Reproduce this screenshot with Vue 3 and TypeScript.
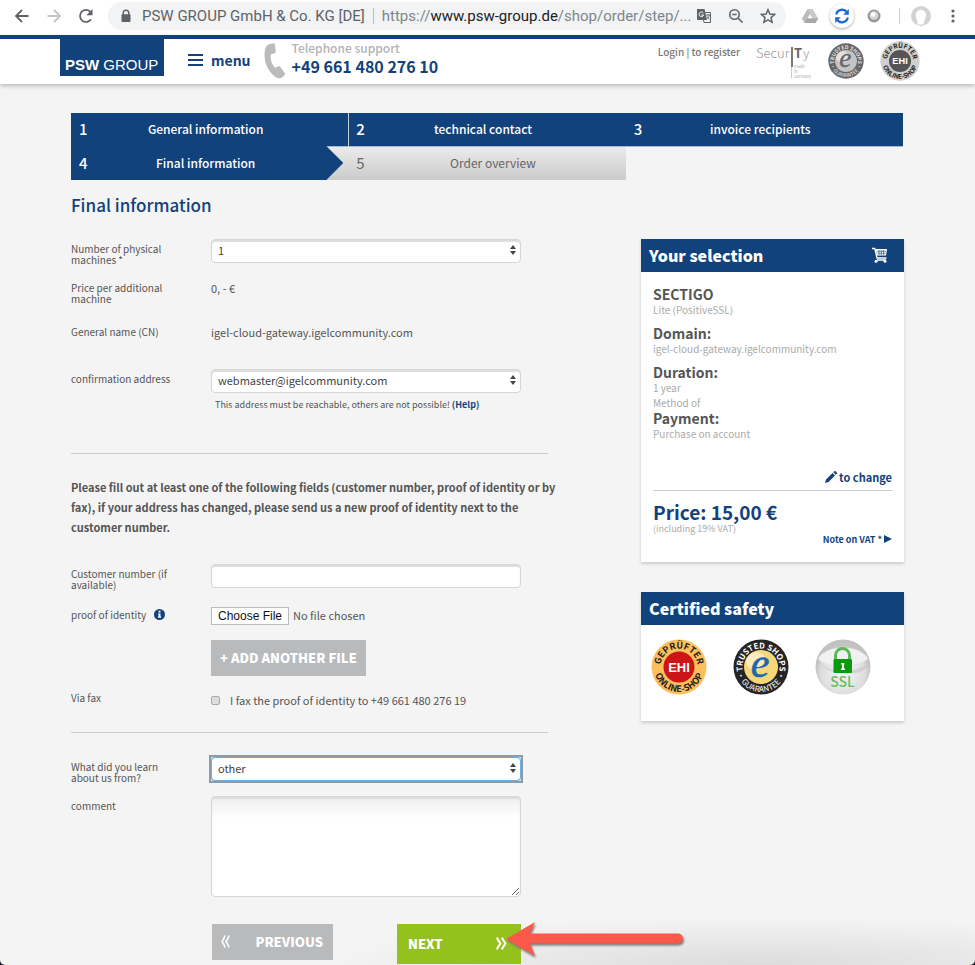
<script setup lang="ts">
import { ref } from 'vue'

interface Step {
  no: number
  label: string
  state: 'done' | 'current' | 'upcoming'
}

interface Detail {
  term: string
  value: string
  lead?: string
}

const steps: Step[] = [
  { no: 1, label: 'General information', state: 'done' },
  { no: 2, label: 'technical contact', state: 'done' },
  { no: 3, label: 'invoice recipients', state: 'done' },
  { no: 4, label: 'Final information', state: 'current' },
  { no: 5, label: 'Order overview', state: 'upcoming' },
]

const details: Detail[] = [
  { term: 'SECTIGO', value: 'Lite (PositiveSSL)' },
  { term: 'Domain:', value: 'igel-cloud-gateway.igelcommunity.com' },
  { term: 'Duration:', value: '1 year' },
  { term: 'Payment:', value: 'Purchase on account', lead: 'Method of' },
]

const machines = ref('1')
const address = ref('webmaster@igelcommunity.com')
const customerNumber = ref('')
const viaFax = ref(false)
const source = ref('other')
const comment = ref('')
</script>

<template>
  <div class="page">
    <svg class="defs" aria-hidden="true">
      <defs>
        <path id="arc-top" d="M10.600 34.300A18.500 18.500 0 1 1 45.400 34.300" />
        <path id="arc-bottom" d="M3 28a25 25 0 0 0 50 0" />
        <symbol id="badge-ehi" viewBox="0 0 56 56">
          <circle cx="28" cy="28" r="27.5" fill="var(--ring)" />
          <circle cx="28" cy="28" r="15.500" fill="var(--core)" />
          <g font-family="Noto Sans CJK SC, sans-serif" font-weight="700" font-size="9" fill="var(--ink)" text-anchor="middle">
            <text><textPath href="#arc-top" startOffset="50%">GEPRÜFTER</textPath></text>
            <text><textPath href="#arc-bottom" startOffset="50%">ONLINE-SHOP</textPath></text>
          </g>
          <text x="28" y="32.500" text-anchor="middle" font-family="Liberation Sans, sans-serif" font-weight="700" font-size="13" fill="#fff">EHI</text>
        </symbol>
        <symbol id="badge-trusted" viewBox="0 0 56 56">
          <circle cx="28" cy="28" r="27.500" fill="var(--ring)" />
          <circle cx="28" cy="28" r="17" fill="var(--core)" />
          <ellipse cx="23" cy="22" rx="10" ry="9" fill="#fff" opacity="0.5" />
          <g font-family="Noto Sans CJK SC, sans-serif" font-weight="700" fill="var(--ink)" text-anchor="middle">
            <text font-size="8"><textPath href="#arc-top" startOffset="50%">TRUSTED SHOPS</textPath></text>
            <text font-size="8" font-weight="400"><textPath href="#arc-bottom" startOffset="50%">· GUARANTEE ·</textPath></text>
          </g>
          <text x="27" y="38" text-anchor="middle" font-family="Liberation Serif, serif" font-style="italic" font-weight="400" font-size="42" fill="var(--letter)" stroke="var(--letter)" stroke-width=".6">e</text>
        </symbol>
      </defs>
    </svg>

    <div class="browser">
      <button class="tool" type="button" aria-label="Back">
        <svg width="16" height="16" viewBox="0 0 16 16" fill="none" stroke="#5f6368" stroke-width="1.8"><path d="M14.500 8H2.500M8 2 2 8l6 6" /></svg>
      </button>
      <button class="tool" type="button" aria-label="Forward">
        <svg width="16" height="16" viewBox="0 0 16 16" fill="none" stroke="#c1c3c5" stroke-width="1.8"><path d="M1.500 8h12M8 2l6 6-6 6" /></svg>
      </button>
      <button class="tool" type="button" aria-label="Reload">
        <svg width="16" height="16" viewBox="0 0 16 16"><path d="M13 11.300A6 6 0 1 1 12.700 4.200" fill="none" stroke="#5f6368" stroke-width="1.800" /><path d="M14.500 1v6.200H8.300z" fill="#5f6368" /></svg>
      </button>
      <div class="omnibox">
        <svg class="lock" width="16" height="16" viewBox="0 0 16 16"><path d="M5.200 7V5a2.800 2.800 0 0 1 5.600 0v2" fill="none" stroke="#5f6368" stroke-width="1.500" /><rect x="3.500" y="6.300" width="9" height="7.700" rx="1" fill="#5f6368" /></svg>
        <span class="issuer">PSW GROUP GmbH &amp; Co. KG [DE]</span>
        <span class="url">https://<b>www.psw-group.de</b>/shop/order/step/...</span>
        <button class="tool" type="button" aria-label="Translate">
          <svg width="16" height="16" viewBox="0 0 16 16"><path d="M6 4.500h8.500v10H8z" fill="#f1f3f4" stroke="#5f6368" /><path d="M1 1h7.500L11 12H2a1 1 0 0 1-1-1z" fill="#5f6368" /><path d="M7.300 5A2.300 2.300 0 1 0 7.600 7H5.400" fill="none" stroke="#fff" /><path d="M10 7h4M12 6v1M13.300 7c-.3 1.800-1.300 3-2.500 4M11 8.500c.5 1 1.300 1.800 2.300 2.500" fill="none" stroke="#5f6368" stroke-width=".9" /></svg>
        </button>
        <button class="tool" type="button" aria-label="Zoom">
          <svg width="16" height="16" viewBox="0 0 16 16" fill="none" stroke="#5f6368" stroke-width="1.600"><circle cx="6.500" cy="6.500" r="4.700" /><path d="m10 10 4.500 4.500M4.300 6.500h4.400" /></svg>
        </button>
        <button class="tool" type="button" aria-label="Bookmark">
          <svg width="16" height="16" viewBox="0 0 16 16"><path d="m8 1.700 1.900 4.400 4.700.4-3.600 3.100 1.100 4.700L8 11.800l-4.100 2.500L5 9.600 1.400 6.500l4.700-.4z" fill="none" stroke="#5f6368" stroke-width="1.500" /></svg>
        </button>
      </div>
      <button class="tool" type="button" aria-label="Drive">
        <svg width="16" height="14" viewBox="0 0 16 14"><path d="M5.500 0h5L16 9.500 13.500 14h-11L0 9.500z" fill="#bbb" /><path d="M5.500 0h5L16 9.500H11z" fill="#c9c9c9" /><path d="m8 5 2.600 4.500H5.400z" fill="#fff" /><path d="M2.500 14 5 9.500h11L13.500 14z" fill="#a9a9a9" /></svg>
      </button>
      <button class="tool" type="button" aria-label="Sync">
        <svg class="sync" width="24" height="24" viewBox="0 0 24 24"><g fill="none" stroke="#1a66d6" stroke-width="2.200"><path d="M6.200 10.500A6 6 0 0 1 17 8.300M17.800 13.500A6 6 0 0 1 7 15.700" /></g><path d="M18.800 5v5.800h-5.600zM5.200 19v-5.800h5.600z" fill="#1a66d6" /></svg>
      </button>
      <button class="tool" type="button" aria-label="Extension">
        <svg width="14" height="14" viewBox="0 0 14 14"><circle cx="7" cy="7" r="6.500" fill="#999" /><circle cx="7" cy="6.500" r="4.300" fill="#d8d8d8" /><circle cx="6" cy="5.500" r="2.300" fill="#fff" /></svg>
      </button>
      <span class="bar"></span>
      <button class="avatar" type="button" aria-label="Profile">
        <svg width="20" height="20" viewBox="0 0 20 20"><circle cx="10" cy="10" r="10" fill="#d3d3d6" /><path d="M6.500 18.500C7.500 16 4.700 12.500 4.700 9a5 5 0 0 1 10.300 0c0 3.500-2.300 5-2.300 9.500z" fill="#fff" /></svg>
      </button>
      <button class="tool" type="button" aria-label="More">
        <svg width="4" height="16" viewBox="0 0 4 16" fill="#5f6368"><circle cx="2" cy="3" r="1.600" /><circle cx="2" cy="8" r="1.600" /><circle cx="2" cy="13" r="1.600" /></svg>
      </button>
    </div>

    <header class="site">
      <a class="logo" href="#"><b>PSW</b> GROUP</a>
      <button class="menu" type="button">
        <svg width="15" height="12" viewBox="0 0 15 12" fill="#12427b"><path d="M0 0h15v2H0zM0 5h15v2H0zM0 10h15v2H0z" /></svg>
        menu
      </button>
      <div class="phone">
        <svg width="22" height="36" viewBox="0 0 22 36" fill="#bbb"><path d="M6 1 9.500.3c.8-.1 1.300.3 1.400 1l.8 7.500c.1.800-.4 1.300-1 1.500L7 11.200c-1 5 .5 9.500 4 13.500l3.500-1.500c.7-.3 1.300-.1 1.700.5l4.600 6.500c.5.700.4 1.300-.2 1.800l-2.800 2.500c-2 1.700-6.500.3-9.800-3.500C2 24 0 17 .7 8.500 1 4.500 3 1.500 6 1z" /></svg>
        <p><span>Telephone support</span><strong>+49 661 480 276 10</strong></p>
      </div>
      <nav class="account"><a href="#">Login</a> | <a href="#">to register</a></nav>
      <svg class="security" width="56" height="36" viewBox="0 0 56 36" font-family="Noto Sans CJK SC, sans-serif" fill="#999">
        <text x="0" y="14" font-size="13" font-weight="300">Secur</text>
        <path d="M35 3h2v20h-2z" fill="#777" /><path d="M35 23h1v11h-1z" fill="#ccc" />
        <text x="38" y="14" font-size="13" font-weight="700" fill="#666">T</text>
        <text x="47" y="14" font-size="13" font-weight="300">y</text>
        <g font-size="4" fill="#aaa"><text x="38" y="24">made</text><text x="38" y="29">in</text><text x="38" y="34">Germany</text></g>
      </svg>
      <svg class="seal trusted grey" width="36" height="36"><use href="#badge-trusted" /></svg>
      <svg class="seal ehi grey" width="40" height="40"><use href="#badge-ehi" /></svg>
    </header>

    <main class="content">
      <ol class="steps">
        <li v-for="step in steps" :key="step.no" :class="step.state">
          <span class="no">{{ step.no }}</span>
          <span class="name">{{ step.label }}</span>
        </li>
      </ol>

      <h1>Final information</h1>

      <div class="columns">
        <form @submit.prevent>
          <div class="row">
            <label for="machines">Number of physical machines *</label>
            <div class="select">
              <select id="machines" v-model="machines"><option>1</option><option>2</option></select>
              <svg width="6" height="10" viewBox="0 0 6 10" fill="#444"><path d="M3 0l3 4H0zM3 10l3-4H0z" /></svg>
            </div>
          </div>
          <div class="row price-row">
            <span class="label">Price per additional machine</span>
            <span class="value">0, - €</span>
          </div>
          <div class="row name-row">
            <span class="label">General name (CN)</span>
            <span class="value">igel-cloud-gateway.igelcommunity.com</span>
          </div>
          <div class="row address-row">
            <label for="address">confirmation address</label>
            <div>
              <div class="select">
                <select id="address" v-model="address"><option>webmaster@igelcommunity.com</option></select>
                <svg width="6" height="10" viewBox="0 0 6 10" fill="#444"><path d="M3 0l3 4H0zM3 10l3-4H0z" /></svg>
              </div>
              <p class="hint">This address must be reachable, others are not possible! <a href="#">(Help)</a></p>
            </div>
          </div>

          <hr>
          <p class="notice">Please fill out at least one of the following fields (customer number, proof of identity or by fax), if your address has changed, please send us a new proof of identity next to the customer number.</p>

          <div class="row">
            <label for="customer">Customer number (if available)</label>
            <input id="customer" v-model="customerNumber" class="text" type="text">
          </div>
          <div class="row file-row">
            <label for="proof">proof of identity
              <svg class="info" width="11" height="11" viewBox="0 0 11 11"><circle cx="5.500" cy="5.500" r="5.500" fill="#12427b" /><path d="M4.600 1.800h1.900v1.600H4.600zM4 4.400h2.500v3.200h.7v1.200H3.900V7.600h.7v-2H4z" fill="#fff" /></svg>
            </label>
            <div>
              <input id="proof" class="file" type="file">
              <button class="add" type="button">+ ADD ANOTHER FILE</button>
            </div>
          </div>
          <div class="row fax-row">
            <span class="label">Via fax</span>
            <label class="choice"><input v-model="viaFax" type="checkbox">I fax the proof of identity to +49 661 480 276 19</label>
          </div>

          <hr class="second">
          <div class="row">
            <label for="source">What did you learn about us from?</label>
            <div class="select focused">
              <select id="source" v-model="source"><option>other</option></select>
              <svg width="6" height="10" viewBox="0 0 6 10" fill="#444"><path d="M3 0l3 4H0zM3 10l3-4H0z" /></svg>
            </div>
          </div>
          <div class="row comment-row">
            <label for="comment">comment</label>
            <textarea id="comment" v-model="comment"></textarea>
          </div>

          <div class="actions">
            <button class="previous" type="button">
              <svg width="9" height="13" viewBox="0 0 9 13" fill="none" stroke="#fff" stroke-width="1.500"><path d="M4 .5C3.500 3 2.500 4.500 1 6.500 2.500 8.500 3.500 10 4 12.500M8 .5C7.500 3 6.500 4.500 5 6.500 6.500 8.500 7.500 10 8 12.500" /></svg>
              PREVIOUS
            </button>
            <div class="forward">
              <button class="next" type="submit">
                NEXT
                <svg width="11" height="13" viewBox="0 0 11 13" fill="none" stroke="#fff" stroke-width="2"><path d="M1 .5C1.500 3 3 4.500 4.500 6.500 3 8.500 1.500 10 1 12.500M6 .5C6.500 3 8 4.500 9.500 6.500 8 8.500 6.500 10 6 12.500" /></svg>
              </button>
              <svg class="pointer" width="184" height="42" viewBox="0 0 184 42"><path d="M1 18 30 1 25 12.500H173a5 5 0 0 1 0 10H25L30 35z" fill="#fd594b" /></svg>
            </div>
          </div>
        </form>

        <aside>
          <section class="card">
            <h2>Your selection
              <svg width="16" height="16" viewBox="0 0 16 16"><path d="M0 1.500h2.800L5 11h9.500M5 13h9" fill="none" stroke="#fff" stroke-width="1.300" /><path d="M3.500 2H15l-1 6.500H5z" fill="#fff" /><path d="M5 4.300h9M5.500 6.300h8M7 3v5M9.300 3v5M11.600 3v5" stroke="#12427b" stroke-width=".6" /><circle cx="4" cy="14.200" r="1.500" fill="#fff" /><circle cx="13" cy="14.200" r="1.500" fill="#fff" /></svg>
            </h2>
            <div class="body">
              <dl>
                <div v-for="item in details" :key="item.term" :class="{ led: item.lead }">
                  <dt><small v-if="item.lead">{{ item.lead }}</small>{{ item.term }}</dt>
                  <dd>{{ item.value }}</dd>
                </div>
              </dl>
              <a class="change" href="#">
                <svg width="12" height="12" viewBox="0 0 12 12" fill="#12427b"><path d="M0 12 1 8.500 7.500 2 10 4.500 3.500 11zM8.300 1.200 9.300.2c.4-.3.800-.2 1.200.1l1.200 1.200c.3.400.4.800.1 1.200l-1 1z" /></svg>
                to change
              </a>
              <div class="total">
                <strong>Price: 15,00 €</strong>
                <span>(including 19% VAT)</span>
              </div>
              <a class="vat" href="#">Note on VAT * <svg width="8" height="8" viewBox="0 0 8 8" fill="#12427b"><path d="M0 0l8 4-8 4z" /></svg></a>
            </div>
          </section>

          <section class="card">
            <h2>Certified safety</h2>
            <div class="seals">
              <svg class="ehi" width="56" height="56"><use href="#badge-ehi" /></svg>
              <svg class="trusted" width="56" height="56"><use href="#badge-trusted" /></svg>
              <svg width="56" height="56" viewBox="0 0 56 56">
                <defs>
                  <radialGradient id="orb" cx=".5" cy=".6" r=".5"><stop offset="0" stop-color="#f6f6f6" /><stop offset=".8" stop-color="#dedede" /><stop offset="1" stop-color="#c2c2c2" /></radialGradient>
                </defs>
                <circle cx="28" cy="28" r="27.500" fill="url(#orb)" />
                <path d="M3 20C10 5 46 5 53 20c-8 7-40 10-50 0z" fill="#f1f1f1" />
                <path d="M2 22c14 14 38 12 52 2-1 5-6 9-13 10-14 2-30 0-39-12z" fill="#c9c9c9" opacity=".7" />
                <path d="M20.500 21v-4.500a7 7 0 0 1 14 0V21" fill="none" stroke="#5cb75a" stroke-width="3" />
                <rect x="18.500" y="20" width="18.500" height="14" rx="1" fill="#0a9a0c" />
                <path d="M26 24h3.500v1.500H29v4h1V31h-4v-1.500h1v-4h-1z" fill="#fff" />
                <text x="27.500" y="48" text-anchor="middle" font-family="Noto Sans CJK SC, sans-serif" font-size="14" font-weight="500" fill="#62c063">SSL</text>
              </svg>
            </div>
          </section>
        </aside>
      </div>
    </main>
  </div>
</template>

<style>
body {
  background: #14142a;
}
</style>

<style scoped>
* {
  box-sizing: border-box;
}

.page {
  --blue: #12427b;
  min-height: 100vh;
  border-radius: 0 0 5px 5px;
  background: radial-gradient(ellipse 45% 48px at 78% 100%, #dcdcdc, transparent) #f4f4f4;
  color: #555;
  font-family: "Noto Sans CJK SC", "Source Sans Pro", sans-serif;
  font-size: 11px;
  line-height: 20px;
}

.page a {
  color: var(--blue);
  text-decoration: none;
}

.page button {
  border: 0;
  background: none;
  padding: 0;
  font-family: inherit;
}

.defs {
  position: absolute;
  width: 0;
  height: 0;
}

p, h1, h2, dl, dd, ol {
  margin: 0;
  padding: 0;
}

/* Browser bar */
.browser {
  display: flex;
  align-items: center;
  height: 35px;
  padding: 0 6px 3px;
  background: #fff;
}

.tool, .avatar {
  display: flex;
  flex: none;
  align-items: center;
  justify-content: center;
  width: 32px;
  height: 28px;
}

.page .avatar {
  width: 24px;
  margin-right: 4px;
}

.sync {
  border-radius: 50%;
  box-shadow: 0 1px 3px #aaa;
}

.bar {
  width: 1px;
  height: 16px;
  margin: 0 9px;
  background: #d0d0d0;
}

.omnibox {
  display: flex;
  flex: 1;
  align-items: center;
  min-width: 0;
  height: 28px;
  margin: 0 8px 0 6px;
  padding: 0 2px 0 10px;
  border-radius: 14px;
  background: #f1f3f4;
  color: #5f6368;
  font-family: Roboto, sans-serif;
  font-size: 15px;
  white-space: nowrap;
}

.lock {
  flex: none;
  margin-right: 8px;
}

.issuer {
  padding-right: 8px;
  border-right: 1px solid #bbb;
  line-height: 16px;
}

.url {
  flex: 1;
  min-width: 0;
  padding-left: 8px;
  color: #80868b;
}

.url b {
  color: #202124;
  font-weight: 400;
}

/* Site header */
.site {
  display: flex;
  align-items: flex-start;
  height: 49px;
  padding: 0 55px 0 60px;
  border-top: 4px solid var(--blue);
  background: #fff;
  box-shadow: 0 2px 4px #bbb;
}

.page .logo {
  width: 104px;
  height: 37px;
  padding: 16px 0 0 5px;
  background: var(--blue);
  color: #fff;
  font: 15px/20px "Liberation Sans", sans-serif;
  white-space: nowrap;
}

.page .menu {
  display: flex;
  align-items: center;
  gap: 8px;
  height: 42px;
  margin-left: 24px;
  color: var(--blue);
  font-size: 14px;
  font-weight: 700;
  line-height: 20px;
}

.phone {
  display: flex;
  gap: 6px;
  margin-left: 13px;
  padding-top: 2px;
}

.phone svg {
  margin-top: 2px;
}

.phone span, .phone strong {
  display: block;
  color: #b3b3b3;
  font-size: 12px;
  font-weight: 500;
  line-height: 14px;
}

.phone strong {
  color: var(--blue);
  font-size: 16px;
  font-weight: 700;
  line-height: 22px;
}

.account {
  margin-left: auto;
  padding-top: 3px;
  color: #777;
  font-size: 10px;
  font-weight: 500;
}

.page .account a {
  color: #777;
}

.security {
  margin: 5px 0 0 16px;
}

.seal {
  margin: 4px 0 0 16px;
}

.seal.ehi {
  margin-top: 2px;
}

.ehi {
  --ring: #fcbf5b;
  --core: #cb1517;
  --ink: #222;
}

.trusted {
  --ring: #252525;
  --core: #f6d77c;
  --ink: #fff;
  --letter: #1f67ad;
}

.ehi.grey {
  --ring: #cfcfcf;
  --core: #555;
}

.trusted.grey {
  --ring: #666;
  --core: #c4c4c4;
  --ink: #e5e5e5;
  --letter: #666;
}

/* Order progress */
.content {
  padding: 29px 71px 1px;
}

.steps {
  display: grid;
  grid-template-columns: repeat(3, 1fr);
  margin-right: 1px;
  list-style: none;
}

.steps li {
  display: grid;
  grid-template-columns: 20px 1fr 36px;
  align-items: center;
  height: 34px;
  padding: 0 0 2px 8px;
  border-bottom: 1px solid #aab8c9;
  background: var(--blue);
  color: #fff;
  font-size: 12px;
  font-weight: 500;
  text-align: center;
}

.steps li:nth-child(2) {
  padding-left: 7px;
  border-left: 1px solid #c5cfda;
}

.steps .no {
  font-size: 15px;
  text-align: left;
}

.steps .current {
  position: relative;
  z-index: 0;
  height: 33px;
  border-bottom: 0;
  background: linear-gradient(#ebebeb, #cbcbcb);
}

.steps .current::before {
  position: absolute;
  z-index: -1;
  inset: -1px 5px 0 0;
  background: var(--blue);
  clip-path: polygon(0 0, calc(100% - 17px) 0, 100% 50%, calc(100% - 17px) 100%, 0 100%);
  content: "";
}

.steps .upcoming {
  grid-template-columns: 20px 1fr 16px;
  height: 33px;
  border-bottom: 0;
  background: linear-gradient(#ebebeb, #cbcbcb);
  color: #666;
  font-weight: 400;
}

h1 {
  margin: 11px 0 20px;
  color: var(--blue);
  font-size: 17px;
  font-weight: 500;
  line-height: 28px;
}

.columns {
  display: grid;
  grid-template-columns: 1fr 263px;
  align-items: start;
  gap: 93px;
}

/* Form */
.row {
  display: grid;
  grid-template-columns: 105px 1fr;
  column-gap: 35px;
  align-items: start;
  padding-right: 27px;
}

.row > label:first-child, .label {
  padding: 4px 0 1px;
  font-size: 10px;
  line-height: 11px;
}

.price-row {
  margin-top: 12px;
}

.name-row {
  margin-top: 17px;
}

.address-row {
  margin-top: 27px;
}

.select {
  position: relative;
}

.select svg {
  position: absolute;
  top: 6px;
  right: 5px;
  pointer-events: none;
}

.select select, .text, textarea {
  display: block;
  width: 100%;
  height: 24px;
  padding: 0 6px 2px;
  border: 1px solid #d6d6d6;
  border-radius: 4px;
  outline: 0;
  background: #fff;
  box-shadow: inset 0 2px 1px #ddd;
  color: #444;
  font: 11px/20px "Noto Sans CJK SC", sans-serif;
  appearance: none;
}

.focused {
  outline: 2px solid #8e9aa5;
}

.select.focused select {
  border-color: #66afe9;
  box-shadow: 0 0 2px #66afe9;
}

.hint {
  margin-top: 2px;
  padding-left: 4px;
  font-size: 9px;
}

.hint a {
  font-weight: 700;
}

hr {
  height: 1px;
  margin: 38px 0 23px;
  border: 0;
  background: #ccc;
}

hr.second {
  margin: 20px 0 24px;
}

.notice {
  margin: 0 -16px 27px 0;
  font-weight: 700;
}

.file-row {
  margin-top: 14px;
}

.info {
  margin-left: 6px;
  vertical-align: -1px;
}

.file {
  display: block;
  width: 100%;
  height: 20px;
  color: #555;
  font: 11px/20px "Noto Sans CJK SC", sans-serif;
}

.file::file-selector-button {
  height: 18px;
  margin: 1px 4px 0 0;
  padding: 0 6px;
  border: 1px solid #bbb;
  background: #fff;
  color: #111;
  font: 12px/14px "Liberation Sans", sans-serif;
}

.page .add {
  height: 36px;
  margin-top: 15px;
  padding: 0 9px 2px;
  background: #b9babc;
  color: #fff;
  font-size: 13px;
  font-weight: 900;
}

.fax-row {
  margin-top: 12px;
}

.choice {
  display: flex;
  align-items: center;
  gap: 10px;
  line-height: 24px;
}

.choice input {
  width: 9px;
  height: 9px;
  margin: 0;
  border: 1px solid #aaa;
  border-radius: 2px;
  background: #ddd;
  appearance: none;
}

.choice input:checked {
  background: var(--blue);
}

.comment-row {
  margin-top: 12px;
}

textarea {
  min-height: 101px;
  background: linear-gradient(#eee, #fff 22px);
  resize: both;
}

.actions {
  display: flex;
  justify-content: space-between;
  align-items: flex-start;
  margin: 27px 27px 0 141px;
}

.page .actions button {
  display: flex;
  align-items: center;
  justify-content: space-between;
  width: 121px;
  height: 36px;
  padding: 0 10px 2px 9px;
  background: #b9babc;
  color: #fff;
  font-size: 13px;
  font-weight: 900;
}

.forward {
  position: relative;
}

.page .actions .next {
  width: 124px;
  height: 40px;
  padding: 0 14px 2px 11px;
  background: #95c11f;
}

.pointer {
  position: absolute;
  top: -3px;
  left: 108px;
  filter: drop-shadow(1px 2px 1px #777);
}

/* Sidebar */
.card {
  margin-bottom: 30px;
  background: #fff;
  box-shadow: 0 2px 3px #ccc;
}

.card h2 {
  display: flex;
  align-items: center;
  justify-content: space-between;
  height: 33px;
  padding: 0 16px 2px 8px;
  background: var(--blue);
  color: #fff;
  font-size: 16px;
  font-weight: 900;
}

.body {
  padding: 14px 12px 16px;
}

.body dl > div {
  margin-bottom: 7px;
}

.body dl > .led {
  margin-top: -7px;
}

.body dt {
  color: #555;
  font-size: 14px;
  font-weight: 700;
  line-height: 16px;
}

.body dt small {
  display: block;
  color: #aaa;
  font-size: 10px;
  font-weight: 400;
  line-height: 14px;
}

.body dd {
  color: #aaa;
  font-size: 10px;
  line-height: 16px;
}

.change {
  display: flex;
  align-items: center;
  justify-content: flex-end;
  gap: 2px;
  margin-top: 25px;
  padding-bottom: 3px;
  border-bottom: 1px solid #ccc;
  font-weight: 700;
}

.total {
  padding-top: 9px;
}

.total strong, .total span {
  display: block;
  color: var(--blue);
  font-size: 19px;
  line-height: 24px;
}

.total span {
  color: #aaa;
  font-size: 9px;
  line-height: 10px;
}

.vat {
  display: block;
  font-size: 9px;
  font-weight: 700;
  line-height: 12px;
  text-align: right;
}

.seals {
  display: flex;
  gap: 26px;
  padding: 14px 10px 26px;
}
</style>
